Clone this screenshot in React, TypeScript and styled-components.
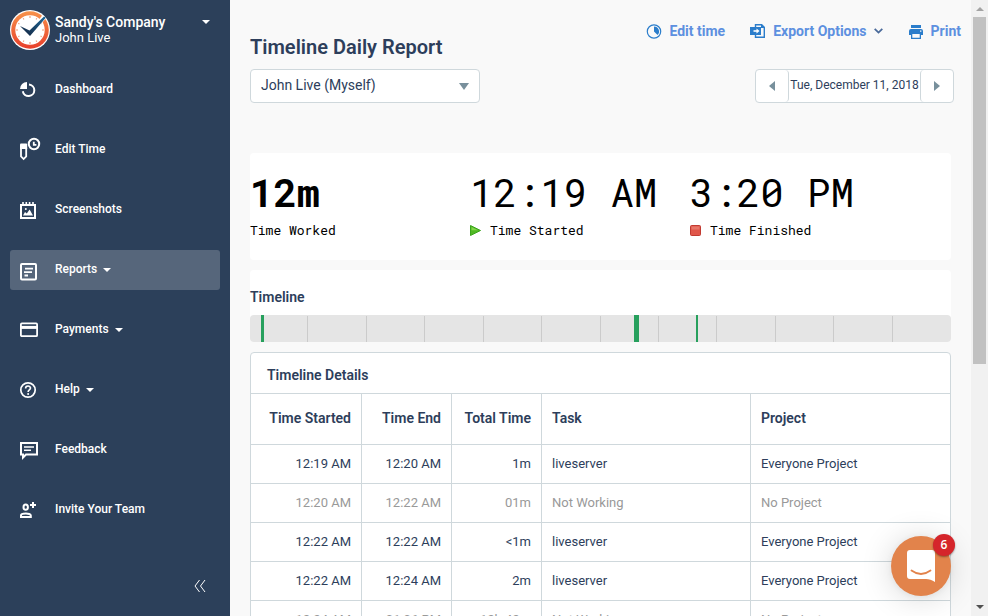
import React from "react";
import styled, { createGlobalStyle } from "styled-components";

const GlobalStyle = createGlobalStyle`
  *, *::before, *::after { box-sizing: border-box; }
  body { margin: 0; background: #f9f9f9; color: #2d3e5b; font-family: Roboto, "Liberation Sans", sans-serif; font-size: 13px; }
  button, select { font: inherit; color: inherit; margin: 0; }
  a { text-decoration: none; }
  svg { display: block; flex: none; overflow: visible; }
`;

const Page = styled.div`
  display: flex;
  height: 100vh;
  overflow: hidden;
`;

const Sidebar = styled.aside`
  flex: 0 0 230px;
  display: flex;
  flex-direction: column;
  background: #2c405a;
  color: #fff;
  padding: 10px 10px 18px;
`;

const Account = styled.button`
  display: flex;
  align-items: center;
  gap: 5px;
  width: 100%;
  height: 40px;
  padding: 0 10px 0 0;
  border: 0;
  background: none;
  color: #fff;
  text-align: left;
`;

const AccountText = styled.span`
  flex: 1;
  display: flex;
  flex-direction: column;
  line-height: 16px;
  padding-bottom: 1px;
`;

const Company = styled.strong`
  font-size: 14px;
  font-weight: 500;
`;

const CaretSlot = styled.span`
  align-self: flex-start;
  padding-top: 10px;
`;

const NavList = styled.ul`
  list-style: none;
  margin: 20px 0 0;
  padding: 0;
  display: flex;
  flex-direction: column;
  gap: 20px;
`;

const NavLink = styled.a<{ $active?: boolean }>`
  display: flex;
  align-items: center;
  height: 40px;
  padding-left: 8px;
  border-radius: 3px;
  color: #fff;
  font-weight: 500;
  font-size: 12px;
  background: ${(p) => (p.$active ? "#56667b" : "transparent")};
`;

const NavLabel = styled.span`
  margin: 0 6px 2px 13px;
`;

const Collapse = styled.button`
  margin: auto 14px 0 auto;
  padding: 6px 0;
  border: 0;
  background: none;
  color: #fff;
`;

const Main = styled.main`
  position: relative;
  flex: 1;
  min-width: 0;
  overflow: hidden;
  padding: 21px 20px 0;
`;

const Header = styled.header`
  display: flex;
  justify-content: space-between;
  margin-right: -10px;
`;

const HeaderSide = styled.div`
  padding-top: 14px;
`;

const Title = styled.h1`
  margin: 0 0 10px;
  font-size: 20px;
  line-height: 24px;
  font-weight: 600;
`;

const SelectBox = styled.div`
  display: grid;
  width: 230px;
  align-items: center;
  > * { grid-area: 1 / 1; }
  > svg { justify-self: end; margin-right: 11px; pointer-events: none; }
`;

const PersonSelect = styled.select`
  appearance: none;
  width: 100%;
  height: 34px;
  padding: 0 30px 2px 10px;
  border: 1px solid #cfd8dc;
  border-radius: 4px;
  background: #fff;
  font-size: 14px;
`;

const HeaderTools = styled.div`
  display: flex;
  flex-direction: column;
  align-items: flex-end;
  gap: 28px;
`;

const Actions = styled.div`
  display: flex;
  align-items: center;
  gap: 25px;
`;

const Action = styled.button`
  display: flex;
  align-items: center;
  gap: 7px;
  height: 20px;
  padding: 0;
  border: 0;
  background: none;
  color: #5d90e0;
  font-size: 14px;
  font-weight: 700;
`;

const DateNav = styled.div`
  display: flex;
  width: 199px;
  height: 34px;
  margin-right: 7px;
  border: 1px solid #cfd8dc;
  border-radius: 4px;
  background: #fff;
`;

const DateStep = styled.button<{ $side: "left" | "right" }>`
  flex: 0 0 33px;
  display: flex;
  align-items: center;
  justify-content: center;
  padding: 0;
  border: 0 solid #cfd8dc;
  border-${(p) => (p.$side === "left" ? "right" : "left")}-width: 1px;
  border-radius: 4px;
  background: none;
`;

const DateText = styled.time`
  flex: 1;
  line-height: 30px;
  font-size: 12px;
  text-align: center;
  white-space: nowrap;
`;

const Stats = styled.section`
  display: grid;
  grid-template-columns: 220px 220px 1fr;
  height: 107px;
  margin-top: 50px;
  padding-top: 14px;
  border-radius: 4px;
  background: #fff;
  color: #000;
  font-family: "Roboto Mono", "Liberation Mono", monospace;
`;

const StatValue = styled.div<{ $bold?: boolean }>`
  font-size: 39px;
  line-height: 50px;
  margin-bottom: 2px;
  font-weight: ${(p) => (p.$bold ? 700 : 400)};
  white-space: nowrap;
`;

const StatLabel = styled.div`
  display: flex;
  align-items: center;
  gap: 9px;
  line-height: 22px;
`;

const TimelineCard = styled.section`
  margin-top: 10px;
  padding-top: 17px;
  border-radius: 4px;
  background: #fff;
`;

const SectionTitle = styled.h2`
  margin: 0;
  font-size: 14px;
  line-height: 20px;
  font-weight: 600;
`;

const Track = styled.div`
  position: relative;
  display: grid;
  grid-template-columns: repeat(12, 1fr);
  height: 27px;
  margin-top: 8px;
  border-radius: 4px;
  background: #e5e5e5;
`;

const Slot = styled.span`
  margin-top: 1px;
  border-right: 1px solid #cbcbcb;
  &:last-of-type { border-right: 0; }
`;

const Worked = styled.i`
  position: absolute;
  top: 0;
  bottom: 0;
  background: #27a05d;
`;

const Details = styled.section`
  margin-top: 10px;
  border: 1px solid #cfd8dc;
  border-radius: 4px;
  background: #fff;
`;

const DetailsTitle = styled(SectionTitle)`
  padding: 12px 16px 8px;
`;

const Table = styled.table`
  width: 100%;
  table-layout: fixed;
  border-collapse: separate;
  border-spacing: 0;
`;

const Col = styled.col<{ $w?: string }>`
  width: ${(p) => p.$w ?? "auto"};
`;

const HeadCell = styled.th<{ $right?: boolean }>`
  height: 51px;
  padding: 0 10px 2px;
  border-top: 1px solid #cfd8dc;
  border-right: 1px solid #cfd8dc;
  font-size: 14px;
  font-weight: 600;
  text-align: ${(p) => (p.$right ? "right" : "left")};
  &:last-child { border-right: 0; }
`;

const Cell = styled.td<{ $right?: boolean }>`
  height: 39px;
  padding: 0 10px 1px;
  border-top: 1px solid #cfd8dc;
  border-right: 1px solid #cfd8dc;
  text-align: ${(p) => (p.$right ? "right" : "left")};
  &:last-child { border-right: 0; }
`;

const Row = styled.tr<{ $idle: boolean }>`
  color: ${(p) => (p.$idle ? "#999" : "#2d3e5b")};
`;

const Chat = styled.button`
  position: absolute;
  right: 20px;
  bottom: 20px;
  width: 60px;
  height: 60px;
  padding: 0;
  border: 0;
  border-radius: 50%;
  background: #e2834b;
  box-shadow: 0 1px 6px rgba(0, 0, 0, 0.06), 0 2px 32px rgba(0, 0, 0, 0.16);
  display: grid;
  place-items: center;
`;

const ChatBadge = styled.span`
  position: absolute;
  top: -2px;
  right: -4px;
  width: 22px;
  height: 22px;
  border-radius: 50%;
  background: #d5252b;
  box-shadow: 0 1px 2px rgba(0, 0, 0, 0.4);
  color: #fff;
  font: 600 12px/21px "Open Sans", sans-serif;
  text-align: center;
`;

const ScrollRail = styled.div`
  flex: 0 0 17px;
  display: flex;
  flex-direction: column;
  align-items: center;
  padding: 7px 0;
  background: #f1f1f1;
`;

const ScrollThumb = styled.div`
  width: 13px;
  flex: 0 0 347px;
  margin: 6px 0 auto;
  background: #c1c1c1;
`;

const Triangle = ({ d, w, h, fill }: { d: string; w: number; h: number; fill: string }) => (
  <svg width={w} height={h} viewBox={`0 0 ${w} ${h}`} fill={fill} aria-hidden="true"><path d={d} /></svg>
);
const Caret = () => <Triangle w={8} h={4} d="M0 0h8l-4 4z" fill="#fff" />;

const Logo = () => (
  <svg width="40" height="40" viewBox="0 0 40 40" aria-hidden="true">
    <defs>
      <linearGradient id="ring" x1="0" y1="0" x2="0" y2="1"><stop stopColor="#f7924a" /><stop offset="1" stopColor="#e83f2b" /></linearGradient>
      <linearGradient id="hand" x1="0" y1="1" x2="1" y2="0"><stop stopColor="#15243e" /><stop offset="1" stopColor="#1d6798" /></linearGradient>
    </defs>
    <circle cx="20" cy="20" r="20" fill="#fff" />
    <circle cx="20" cy="20" r="18.8" fill="url(#ring)" />
    <circle cx="20" cy="20" r="14.7" fill="#fff" />
    {Array.from({ length: 12 }, (_, i) => (
      <path key={i} d={i % 3 ? "M20 6.500v1.300" : "M20 6v2"} stroke="#ef9b78" strokeWidth="1.1" transform={`rotate(${i * 30} 20 20)`} />
    ))}
    <path d="M22 19 32.500 5 36 8.200 24 22z" fill="#fff" />
    <path d="M10 16 19.500 20.500 34 6.500 35.800 7.700 20 26z" fill="url(#hand)" />
  </svg>
);

const icons: Record<string, React.ReactNode> = {
  dashboard: <><path d="M9 4v7H2a7 7 0 0 1 7-7z" fill="#fff" /><path d="M11 6.5a5.800 5.800 0 1 1-6.200 6.800" strokeWidth="2" /></>,
  edit: <><path d="M3 10v8.300l2.600 2.700 2.600-2.700V10" strokeWidth="1.8" /><path d="M2 6.500q0-1 1-1h5.200q1 0 1 1V11H2z" fill="#fff" /><circle cx="16" cy="6" r="5.200" strokeWidth="2" /><path d="M15.800 3.800V6.800h2.600" strokeWidth="1.8" /></>,
  shots: <><rect x="3" y="7" width="14" height="13" strokeWidth="2" /><path d="M5 4v3M8.3 4v3M11.6 4v3M15 4v3" strokeWidth="1.6" /><path d="M5 17.500 7 14l1.800 1.500 2.800-4 3.400 6z" fill="#fff" /><circle cx="7.8" cy="11" r="1" fill="#fff" /></>,
  reports: <><rect x="3" y="6" width="15" height="15.5" rx="1" strokeWidth="2" /><path d="M7 10.700h8M6 14.200h8M6.500 17.500h3.500" strokeWidth="1.8" /></>,
  payments: <><rect x="2.9" y="5.4" width="16.2" height="12.8" rx="1" strokeWidth="1.8" /><path d="M3 9.4h16" strokeWidth="3" /></>,
  help: <><circle cx="10" cy="12" r="7.2" strokeWidth="1.7" /><path d="M7.6 10.400c0-3.200 4.900-3 4.900-.3 0 1.700-2.400 1.900-2.400 3.800" strokeWidth="1.6" /><circle cx="10.1" cy="15.9" r="1" fill="#fff" /></>,
  feedback: <><path d="M3 5h16v11.500H8L5 19.500V16.500H3z" strokeWidth="2" /><path d="M6 9h10M6 12.200h7" strokeWidth="1.6" /></>,
  invite: <><ellipse cx="7.7" cy="9.2" rx="2.2" ry="2.6" strokeWidth="2" /><path d="M3 19v-1.600C3 15 12.800 15 12.800 17.400V19z" strokeWidth="2" /><path d="M15 4v6M12 7h6" strokeWidth="2" /></>,
};

const NavIcon = ({ name }: { name: string }) => (
  <svg width="24" height="24" viewBox="0 0 24 24" fill="none" stroke="#fff" strokeWidth="0" aria-hidden="true">{icons[name]}</svg>
);

const nav: { icon: string; label: string; menu?: boolean; active?: boolean }[] = [
  { icon: "dashboard", label: "Dashboard" },
  { icon: "edit", label: "Edit Time" },
  { icon: "shots", label: "Screenshots" },
  { icon: "reports", label: "Reports", menu: true, active: true },
  { icon: "payments", label: "Payments", menu: true },
  { icon: "help", label: "Help", menu: true },
  { icon: "feedback", label: "Feedback" },
  { icon: "invite", label: "Invite Your Team" },
];

const worked = [
  { left: 1.6, width: 0.43 },
  { left: 54.8, width: 0.71 },
  { left: 63.6, width: 0.29 },
];

const rows = [
  ["12:19 AM", "12:20 AM", "1m", "liveserver", "Everyone Project"],
  ["12:20 AM", "12:22 AM", "01m", "Not Working", "No Project"],
  ["12:22 AM", "12:22 AM", "<1m", "liveserver", "Everyone Project"],
  ["12:22 AM", "12:24 AM", "2m", "liveserver", "Everyone Project"],
  ["12:24 AM", "01:06 PM", "12h 42m", "Not Working", "No Project"],
];

export default function App() {
  return (
    <Page>
      <GlobalStyle />
      <Sidebar>
        <Account>
          <Logo />
          <AccountText><Company>Sandy's Company</Company><span>John Live</span></AccountText>
          <CaretSlot><Caret /></CaretSlot>
        </Account>
        <nav>
          <NavList>
            {nav.map((n) => (
              <li key={n.label}>
                <NavLink href="#" $active={n.active}>
                  <NavIcon name={n.icon} />
                  <NavLabel>{n.label}</NavLabel>
                  {n.menu && <Caret />}
                </NavLink>
              </li>
            ))}
          </NavList>
        </nav>
        <Collapse aria-label="Collapse sidebar">
          <svg width="12" height="12" viewBox="0 0 12 12" fill="none" stroke="currentColor" strokeWidth="1"><path d="M5.500 0 1 6l4.500 6M11 0 6.500 6l4.500 6" /></svg>
        </Collapse>
      </Sidebar>
      <Main>
        <Header>
          <HeaderSide>
            <Title>Timeline Daily Report</Title>
            <SelectBox>
              <PersonSelect aria-label="Person"><option>John Live (Myself)</option></PersonSelect>
              <Triangle w={10} h={7} d="M0 0h10L5 7z" fill="#78909c" />
            </SelectBox>
          </HeaderSide>
          <HeaderTools>
            <Actions>
              <Action>
                <svg width="16" height="16" viewBox="0 0 16 16"><circle cx="8" cy="8.500" r="6.700" fill="none" stroke="#2b7dcb" strokeWidth="1.200" /><path d="M8 3.500a5 5 0 0 1 3.600 8.500L8 8.500z" fill="#2b7dcb" /></svg>
                Edit time
              </Action>
              <Action>
                <svg width="16" height="16" viewBox="0 0 16 16"><path d="M5.500 4V1.700h6.200l2.600 2.600v10H5.500V12" fill="none" stroke="#2b7dcb" strokeWidth="1.400" /><path d="M11 1v4h4z" fill="#2b7dcb" /><rect x="0" y="4" width="11" height="8" fill="#2b7dcb" /><path d="M3.500 8h4" stroke="#fff" strokeWidth="1.600" /><path d="M6.500 5.500 9.500 8l-3 2.500z" fill="#fff" /></svg>
                Export Options
                <svg width="9" height="6" viewBox="0 0 9 6" fill="none" stroke="#4a6a9a" strokeWidth="1.800"><path d="M.7.900 4.500 4.600 8.300.900" /></svg>
              </Action>
              <Action>
                <svg width="16" height="16" viewBox="0 0 16 16" fill="#2b7dcb"><path d="M3 2h10v3H3z" /><path fillRule="evenodd" d="M3 6h10q2 0 2 2v4h-2v4H3v-4H1V8q0-2 2-2zm1.300 5v3.700h7.400V11zM12 7.500v1.300h1.400V7.500z" /></svg>
                Print
              </Action>
            </Actions>
            <DateNav>
              <DateStep $side="left" aria-label="Previous day"><Triangle w={6} h={10} d="M6 0v10L0 5z" fill="#78909c" /></DateStep>
              <DateText>Tue, December 11, 2018</DateText>
              <DateStep $side="right" aria-label="Next day"><Triangle w={6} h={10} d="M0 0v10l6-5z" fill="#78909c" /></DateStep>
            </DateNav>
          </HeaderTools>
        </Header>

        <Stats>
          <div><StatValue $bold>12m</StatValue><StatLabel>Time Worked</StatLabel></div>
          <div>
            <StatValue>12:19 AM</StatValue>
            <StatLabel>
              <svg width="11" height="11" viewBox="0 0 11 11"><path d="M.5.500 10.500 5.500.5 10.500z" fill="#4fb822" stroke="#3aa41c" /><path d="M1.500 2 8 5.200H1.500z" fill="#83d64a" /></svg>
              Time Started
            </StatLabel>
          </div>
          <div>
            <StatValue>3:20 PM</StatValue>
            <StatLabel>
              <svg width="11" height="11" viewBox="0 0 11 11"><rect x=".5" y=".5" width="10" height="10" rx="1" fill="#e0564a" stroke="#c13a31" /><path d="M1.500 1.500h8v3h-8z" fill="#e87668" /></svg>
              Time Finished
            </StatLabel>
          </div>
        </Stats>

        <TimelineCard>
          <SectionTitle>Timeline</SectionTitle>
          <Track>
            {Array.from({ length: 12 }, (_, i) => <Slot key={i} />)}
            {worked.map((w) => <Worked key={w.left} style={{ left: `${w.left}%`, width: `${w.width}%` }} />)}
          </Track>
        </TimelineCard>

        <Details>
          <DetailsTitle>Timeline Details</DetailsTitle>
          <Table>
            <colgroup><Col $w="111px" /><Col $w="90px" /><Col $w="90px" /><Col $w="209px" /><Col /></colgroup>
            <thead>
              <tr>
                {["Time Started", "Time End", "Total Time", "Task", "Project"].map((h, i) => <HeadCell key={h} $right={i < 3}>{h}</HeadCell>)}
              </tr>
            </thead>
            <tbody>
              {rows.map((r, k) => (
                <Row key={k} $idle={r[3] === "Not Working"}>
                  {r.map((c, i) => <Cell key={i} $right={i < 3}>{c}</Cell>)}
                </Row>
              ))}
            </tbody>
          </Table>
        </Details>
        <Chat aria-label="Open chat, 6 unread">
          <svg width="28" height="32" viewBox="0 0 28 32"><path d="M3 0h22q3 0 3 3v29c-3-2-6-3-9-3H3q-3 0-3-3V3q0-3 3-3z" fill="#fff" /><path d="M4.500 20.500q9.500 7 19 0" fill="none" stroke="#e2834b" strokeWidth="1.800" strokeLinecap="round" /></svg>
          <ChatBadge>6</ChatBadge>
        </Chat>
      </Main>
      <ScrollRail aria-hidden="true">
        <Triangle w={8} h={4} d="M4 0l4 4H0z" fill="#a3a3a3" />
        <ScrollThumb />
        <Triangle w={8} h={4} d="M0 0h8L4 4z" fill="#505050" />
      </ScrollRail>
    </Page>
  );
}
